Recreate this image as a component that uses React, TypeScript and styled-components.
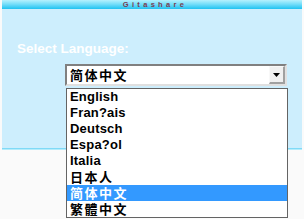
import React from "react";
import styled, { createGlobalStyle } from "styled-components";

const Global = createGlobalStyle`
  html, body { margin: 0; padding: 0; background: #fafafa; }
  body { width: 304px; height: 219px; overflow: hidden; font-family: "Liberation Sans", Arial, sans-serif; }
`;

const Page = styled.div`
  padding: 0 2px;
  width: 300px;
`;

const Header = styled.div`
  height: 9px;
  background: linear-gradient(to bottom, #b6f1fd 0%, #6fdcf9 50%, #20c3f1 100%);
  display: flex;
  justify-content: center;
  align-items: center;
`;

const Title = styled.span`
  font-family: "Liberation Sans", Arial, sans-serif;
  font-weight: bold;
  font-size: 7.5px;
  letter-spacing: 3.3px;
  color: #7a3c52;
  line-height: 7px;
  margin-left: 6px;
`;

const Panel = styled.div`
  position: relative;
  height: 140px;
  background: #cdeefd;
  border-bottom: 1px solid #7fdaf7;
  box-shadow: 0 1px 0 #b5ecfb;
  box-sizing: border-box;
  padding: 32px 0 0 15px;
`;

const Label = styled.div`
  color: #ffffff;
  font-weight: bold;
  font-size: 13.5px;
  line-height: 16px;
`;

const SelectBox = styled.div`
  position: absolute;
  left: 63px;
  top: 55px;
  width: 222px;
  height: 22px;
  box-sizing: border-box;
  background: #ffffff;
  border-top: 2px solid #808080;
  border-left: 2px solid #808080;
  border-right: 2px solid #e0e0e0;
  border-bottom: 2px solid #e0e0e0;
  display: flex;
  align-items: center;
`;

const Value = styled.span`
  flex: 1;
  padding-left: 3px;
  font-family: "Noto Sans CJK SC", sans-serif;
  font-weight: bold;
  font-size: 13px;
  letter-spacing: 1.5px;
  line-height: 16px;
  color: #000;
`;

const ArrowButton = styled.div`
  width: 16px;
  height: 18px;
  box-sizing: border-box;
  background: #f0f0f0;
  border-top: 1px solid #f8f8f8;
  border-left: 1px solid #f8f8f8;
  border-right: 2px solid #a0a0a0;
  border-bottom: 2px solid #a0a0a0;
  display: flex;
  align-items: center;
  justify-content: center;
`;

const List = styled.ul`
  position: absolute;
  left: 64px;
  top: 79px;
  width: 222px;
  margin: 0;
  padding: 0;
  list-style: none;
  box-sizing: border-box;
  background: #ffffff;
  border: 1px solid #646464;
  z-index: 2;
`;

const Item = styled.li<{ $active?: boolean; $cjk?: boolean }>`
  display: flex;
  align-items: center;
  height: 16px;
  line-height: 16px;
  padding-left: 3px;
  font-weight: bold;
  font-size: 13px;
  letter-spacing: ${(p) => (p.$cjk ? "1.5px" : "0.2px")};
  font-family: ${(p) =>
    p.$cjk ? '"Noto Sans CJK SC", sans-serif' : '"Liberation Sans", Arial, sans-serif'};
  background: ${(p) => (p.$active ? "#3399ff" : "transparent")};
  color: ${(p) => (p.$active ? "#ffffff" : "#000000")};
  white-space: nowrap;
`;

const items: { label: string; cjk?: boolean; active?: boolean }[] = [
  { label: "English" },
  { label: "Fran?ais" },
  { label: "Deutsch" },
  { label: "Espa?ol" },
  { label: "Italia" },
  { label: "日本人", cjk: true },
  { label: "简体中文", cjk: true, active: true },
  { label: "繁體中文", cjk: true },
];

export default function App() {
  return (
    <Page>
      <Global />
      <Header>
        <Title>Gitashare</Title>
      </Header>
      <Panel>
        <Label>Select Language:</Label>
        <SelectBox>
          <Value>简体中文</Value>
          <ArrowButton>
            <svg width="7" height="4" viewBox="0 0 7 4">
              <polygon points="0,0 7,0 3.5,4" fill="#000" />
            </svg>
          </ArrowButton>
        </SelectBox>
        <List>
          {items.map((it) => (
            <Item key={it.label} $active={it.active} $cjk={it.cjk}>
              {it.label}
            </Item>
          ))}
        </List>
      </Panel>
    </Page>
  );
}
